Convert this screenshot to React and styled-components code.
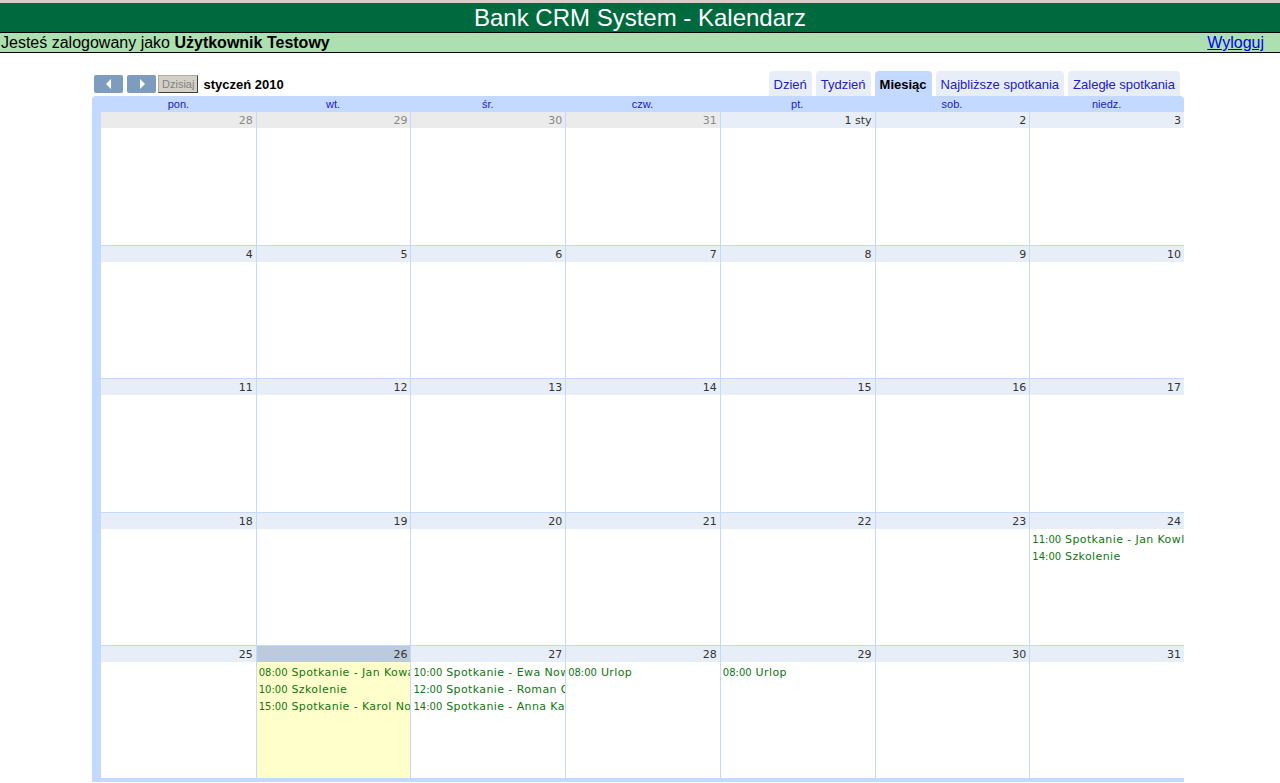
import styled, { createGlobalStyle } from "styled-components";

const GlobalStyle = createGlobalStyle`
  body {
    margin: 0;
    background: #fff;
    font-family: "Liberation Sans", Arial, sans-serif;
  }
`;

const weekDays = ["pon.", "wt.", "śr.", "czw.", "pt.", "sob.", "niedz."];

const events = {
  24: [
    ["11:00", "Spotkanie - Jan Kowlaski"],
    ["14:00", "Szkolenie"],
  ],
  26: [
    ["08:00", "Spotkanie - Jan Kowalski"],
    ["10:00", "Szkolenie"],
    ["15:00", "Spotkanie - Karol Nowak"],
  ],
  27: [
    ["10:00", "Spotkanie - Ewa Nowak"],
    ["12:00", "Spotkanie - Roman Gral"],
    ["14:00", "Spotkanie - Anna Karska"],
  ],
  28: [["08:00", "Urlop"]],
  29: [["08:00", "Urlop"]],
};

const buildWeeks = () => {
  const days = [
    { n: 28, other: true },
    { n: 29, other: true },
    { n: 30, other: true },
    { n: 31, other: true },
  ];
  for (let i = 1; i <= 31; i++) days.push({ n: i, label: i === 1 ? "1 sty" : String(i) });
  const weeks = [];
  for (let i = 0; i < days.length; i += 7) weeks.push(days.slice(i, i + 7));
  return weeks;
};

export default function App() {
  const weeks = buildWeeks();
  return (
    <>
      <GlobalStyle />
      <TopBar>Bank CRM System - Kalendarz</TopBar>
      <LoginBar>
        <span>
          Jesteś zalogowany jako <b>Użytkownik Testowy</b>
        </span>
        <LogoutLink href="#">Wyloguj</LogoutLink>
      </LoginBar>
      <CalendarWrap>
        <NavRow>
          <NavLeft>
            <ArrowButton>
              <svg width="8" height="10" viewBox="0 0 8 10">
                <path d="M6 0 L1 5 L6 10 Z" fill="#fff" />
              </svg>
            </ArrowButton>
            <ArrowButton>
              <svg width="8" height="10" viewBox="0 0 8 10">
                <path d="M2 0 L7 5 L2 10 Z" fill="#fff" />
              </svg>
            </ArrowButton>
            <TodayButton>Dzisiaj</TodayButton>
            <MonthTitle>styczeń 2010</MonthTitle>
          </NavLeft>
          <Tabs>
            <Tab>Dzień</Tab>
            <Tab>Tydzień</Tab>
            <Tab active>Miesiąc</Tab>
            <Tab>Najbliższe spotkania</Tab>
            <Tab>Zaległe spotkania</Tab>
          </Tabs>
        </NavRow>
        <DayHeader>
          {weekDays.map((d) => (
            <DayName key={d}>{d}</DayName>
          ))}
        </DayHeader>
        <Body>
          {weeks.map((week, wi) => (
            <Week key={wi} first={wi === 0}>
              {week.map((day, di) => {
                const today = !day.other && day.n === 26;
                const list = !day.other ? events[day.n] || [] : [];
                return (
                  <Cell key={di} first={di === 0} today={today}>
                    <DayNum other={day.other} today={today}>
                      {day.label || day.n}
                    </DayNum>
                    <EventList>
                      {list.map(([t, title]) => (
                        <Event key={t}>
                          <Time>{t}</Time> {title}
                        </Event>
                      ))}
                    </EventList>
                  </Cell>
                );
              })}
            </Week>
          ))}
        </Body>
      </CalendarWrap>
    </>
  );
}

const TopBar = styled.div`
  border-top: 3px solid #d4d0c8;
  background: #006a3f;
  color: #fff;
  height: 29px;
  line-height: 29px;
  text-align: center;
  font-size: 24px;
  border-bottom: 1px solid #000;
`;

const LoginBar = styled.div`
  background: #addfb0;
  height: 19px;
  line-height: 20px;
  font-size: 16px;
  color: #000;
  display: flex;
  justify-content: space-between;
  padding: 0 16px 0 1px;
  border-bottom: 1px solid #000;
  b {
    font-weight: bold;
  }
`;

const LogoutLink = styled.a`
  color: #0000ee;
  text-decoration: underline;
`;

const CalendarWrap = styled.div`
  margin: 18px 0 0 92px;
  width: 1092px;
`;

const NavRow = styled.div`
  display: flex;
  justify-content: space-between;
  align-items: flex-end;
  height: 25px;
`;

const NavLeft = styled.div`
  display: flex;
  align-items: center;
  gap: 3px;
  padding: 0 0 3px 2px;
`;

const ArrowButton = styled.div`
  width: 29px;
  height: 18px;
  background: #7d9cc0;
  border-radius: 2px;
  display: flex;
  align-items: center;
  justify-content: center;
  margin-right: 1px;
`;

const TodayButton = styled.div`
  height: 16px;
  line-height: 16px;
  padding: 0 3px;
  background: #d4d0c8;
  color: #808080;
  font-size: 11px;
  border: 1px solid #b0aca4;
  border-right-color: #404040;
  border-bottom-color: #404040;
  margin-left: -2px;
`;

const MonthTitle = styled.div`
  font-size: 13px;
  font-weight: bold;
  color: #000;
  margin-left: 2px;
`;

const Tabs = styled.div`
  display: flex;
  gap: 4px;
  padding-right: 4px;
`;

const Tab = styled.div`
  height: 25px;
  line-height: 28px;
  padding: 0 5px;
  border-radius: 4px 4px 0 0;
  font-size: 13px;
  background: ${(p) => (p.active ? "#c3d9ff" : "#e8eef7")};
  color: ${(p) => (p.active ? "#000" : "#2020c8")};
  font-weight: ${(p) => (p.active ? "bold" : "normal")};
`;

const DayHeader = styled.div`
  display: grid;
  grid-template-columns: repeat(7, 1fr);
  background: #c3d9ff;
  padding-left: 9px;
  height: 16px;
  border-radius: 4px 4px 0 0;
`;

const DayName = styled.div`
  text-align: center;
  font-size: 11px;
  line-height: 17px;
  color: #2020c8;
`;

const Body = styled.div`
  border-left: 9px solid #c3d9ff;
  border-bottom: 4px solid #c3d9ff;
  height: 666px;
  display: grid;
  grid-template-rows: repeat(5, 1fr);
`;

const Week = styled.div`
  display: grid;
  grid-template-columns: repeat(7, 1fr);
  border-top: ${(p) => (p.first ? "none" : "1px solid #c3d9ff")};
  min-height: 0;
`;

const Cell = styled.div`
  border-left: ${(p) => (p.first ? "none" : "1px solid #c3d9ff")};
  background: ${(p) => (p.today ? "#ffffcc" : "#fff")};
  display: flex;
  flex-direction: column;
  overflow: hidden;
  min-width: 0;
`;

const DayNum = styled.div`
  height: 16px;
  line-height: 17px;
  text-align: right;
  padding-right: 3px;
  font-size: 11px;
  font-family: "DejaVu Sans", Verdana, sans-serif;
  background: ${(p) => (p.today ? "#bbcbdb" : p.other ? "#ebebeb" : "#e8eef7")};
  color: ${(p) => (p.other ? "#888" : "#333")};
`;

const EventList = styled.div`
  padding: 2px 0 0 2px;
`;

const Event = styled.div`
  white-space: nowrap;
  overflow: hidden;
  font-family: "DejaVu Sans", Verdana, sans-serif;
  font-size: 11px;
  letter-spacing: 0.4px;
  line-height: 17px;
  color: #117711;
`;

const Time = styled.span`
  font-size: 10px;
  letter-spacing: 0;
`;
